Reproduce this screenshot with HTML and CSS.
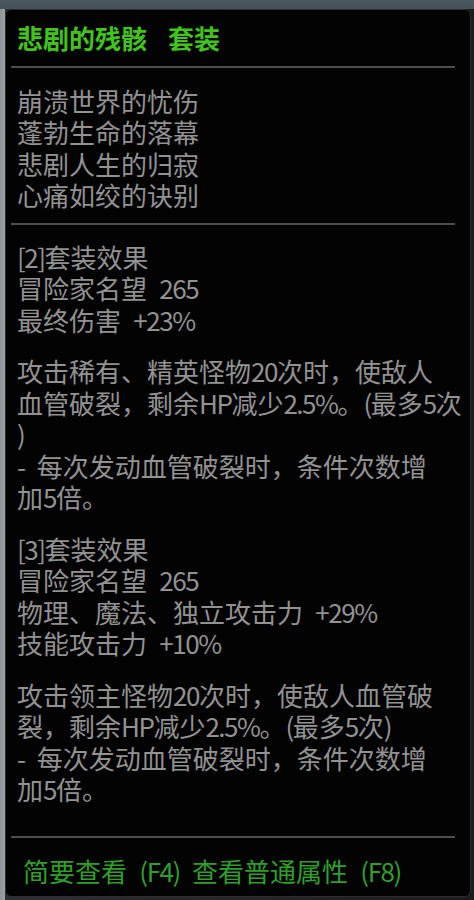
FILE: index.html
```html
<!DOCTYPE html>
<html lang="zh-CN">
<head>
<meta charset="utf-8">
<title>悲剧的残骸 套装</title>
<link rel="stylesheet" href="styles.css">
</head>
<body>
<div class="scene">
  <div class="panel">
    <div class="title">
      <span>悲剧的残骸</span>
      <span>套装</span>
    </div>
    <div class="rule"></div>
    <div class="lore">
      <div class="line">崩溃世界的忧伤</div>
      <div class="line">蓬勃生命的落幕</div>
      <div class="line">悲剧人生的归寂</div>
      <div class="line">心痛如绞的诀别</div>
    </div>
    <div class="rule"></div>
    <div class="effects">
      <div class="para">
        <div class="line"><span class="a">[2]</span>套装效果</div>
        <div class="line">冒险家名望<span class="a"> 265</span></div>
        <div class="line">最终伤害<span class="a"> +23%</span></div>
      </div>
      <div class="para">
        <div class="line">攻击稀有、精英怪物<span class="a">20</span>次时，使敌人</div>
        <div class="line">血管破裂，剩余<span class="a">HP</span>减少<span class="a">2.5%</span>。<span class="a">(</span>最多<span class="a">5</span>次</div>
        <div class="line"><span class="a">)</span></div>
        <div class="line"><span class="a">- </span>每次发动血管破裂时，条件次数增</div>
        <div class="line">加<span class="a">5</span>倍。</div>
      </div>
      <div class="para">
        <div class="line"><span class="a">[3]</span>套装效果</div>
        <div class="line">冒险家名望<span class="a"> 265</span></div>
        <div class="line">物理、魔法、独立攻击力<span class="a"> +29%</span></div>
        <div class="line">技能攻击力<span class="a"> +10%</span></div>
      </div>
      <div class="para">
        <div class="line">攻击领主怪物<span class="a">20</span>次时，使敌人血管破</div>
        <div class="line">裂，剩余<span class="a">HP</span>减少<span class="a">2.5%</span>。<span class="a">(</span>最多<span class="a">5</span>次<span class="a">)</span></div>
        <div class="line"><span class="a">- </span>每次发动血管破裂时，条件次数增</div>
        <div class="line">加<span class="a">5</span>倍。</div>
      </div>
    </div>
    <div class="footer">
      <div class="rule"></div>
      <div class="hint">简要查看<span class="a"> (F4) </span>查看普通属性<span class="a"> (F8)</span></div>
    </div>
  </div>
</div>
</body>
</html>
```

FILE: styles.css
```css
html, body {
  margin: 0;
  padding: 0;
}

body {
  width: 474px;
  height: 900px;
  overflow: hidden;
  background: linear-gradient(90deg, #8f9496 0px, #9ea2a3 5px, #2a3034 5px, #1a1d1f 100%);
  font-family: "Noto Sans CJK SC", "Noto Sans", sans-serif;
}

.scene {
  height: 900px;
  padding: 9px 3px 3px 5px;
  box-sizing: border-box;
  background: linear-gradient(180deg, #4c5961 0px, #45525a 9px, transparent 9px);
}

.panel {
  width: 466px;
  height: 888px;
  box-sizing: border-box;
  border: 1px solid #2e2e2e;
  border-radius: 6px;
  background: #030303;
  display: flex;
  flex-direction: column;
  font-size: 26px;
  line-height: 31.5px;
  color: #929292;
}

.title {
  display: flex;
  gap: 21px;
  padding: 12px 0 0 11px;
  height: 31.5px;
  color: #40c41c;
  font-weight: bold;
  margin-bottom: 12px;
}

.rule {
  height: 2px;
  background: #4e4e4e;
  margin: 0 15px 0 5px;
  flex: none;
}

.lore {
  padding: 17px 0 12px 11px;
}

.effects {
  flex: 1;
  display: flex;
  flex-direction: column;
  gap: 20px;
  padding: 16px 0 0 11px;
}

.line {
  white-space: nowrap;
  height: 31.5px;
}

.a {
  letter-spacing: -1.5px;
  word-spacing: 8px;
  white-space: pre;
}

.footer {
  flex: none;
}

.hint {
  padding: 17px 0 10px 17px;
  height: 31.5px;
  color: #2f9f2a;
  white-space: nowrap;
}
```
